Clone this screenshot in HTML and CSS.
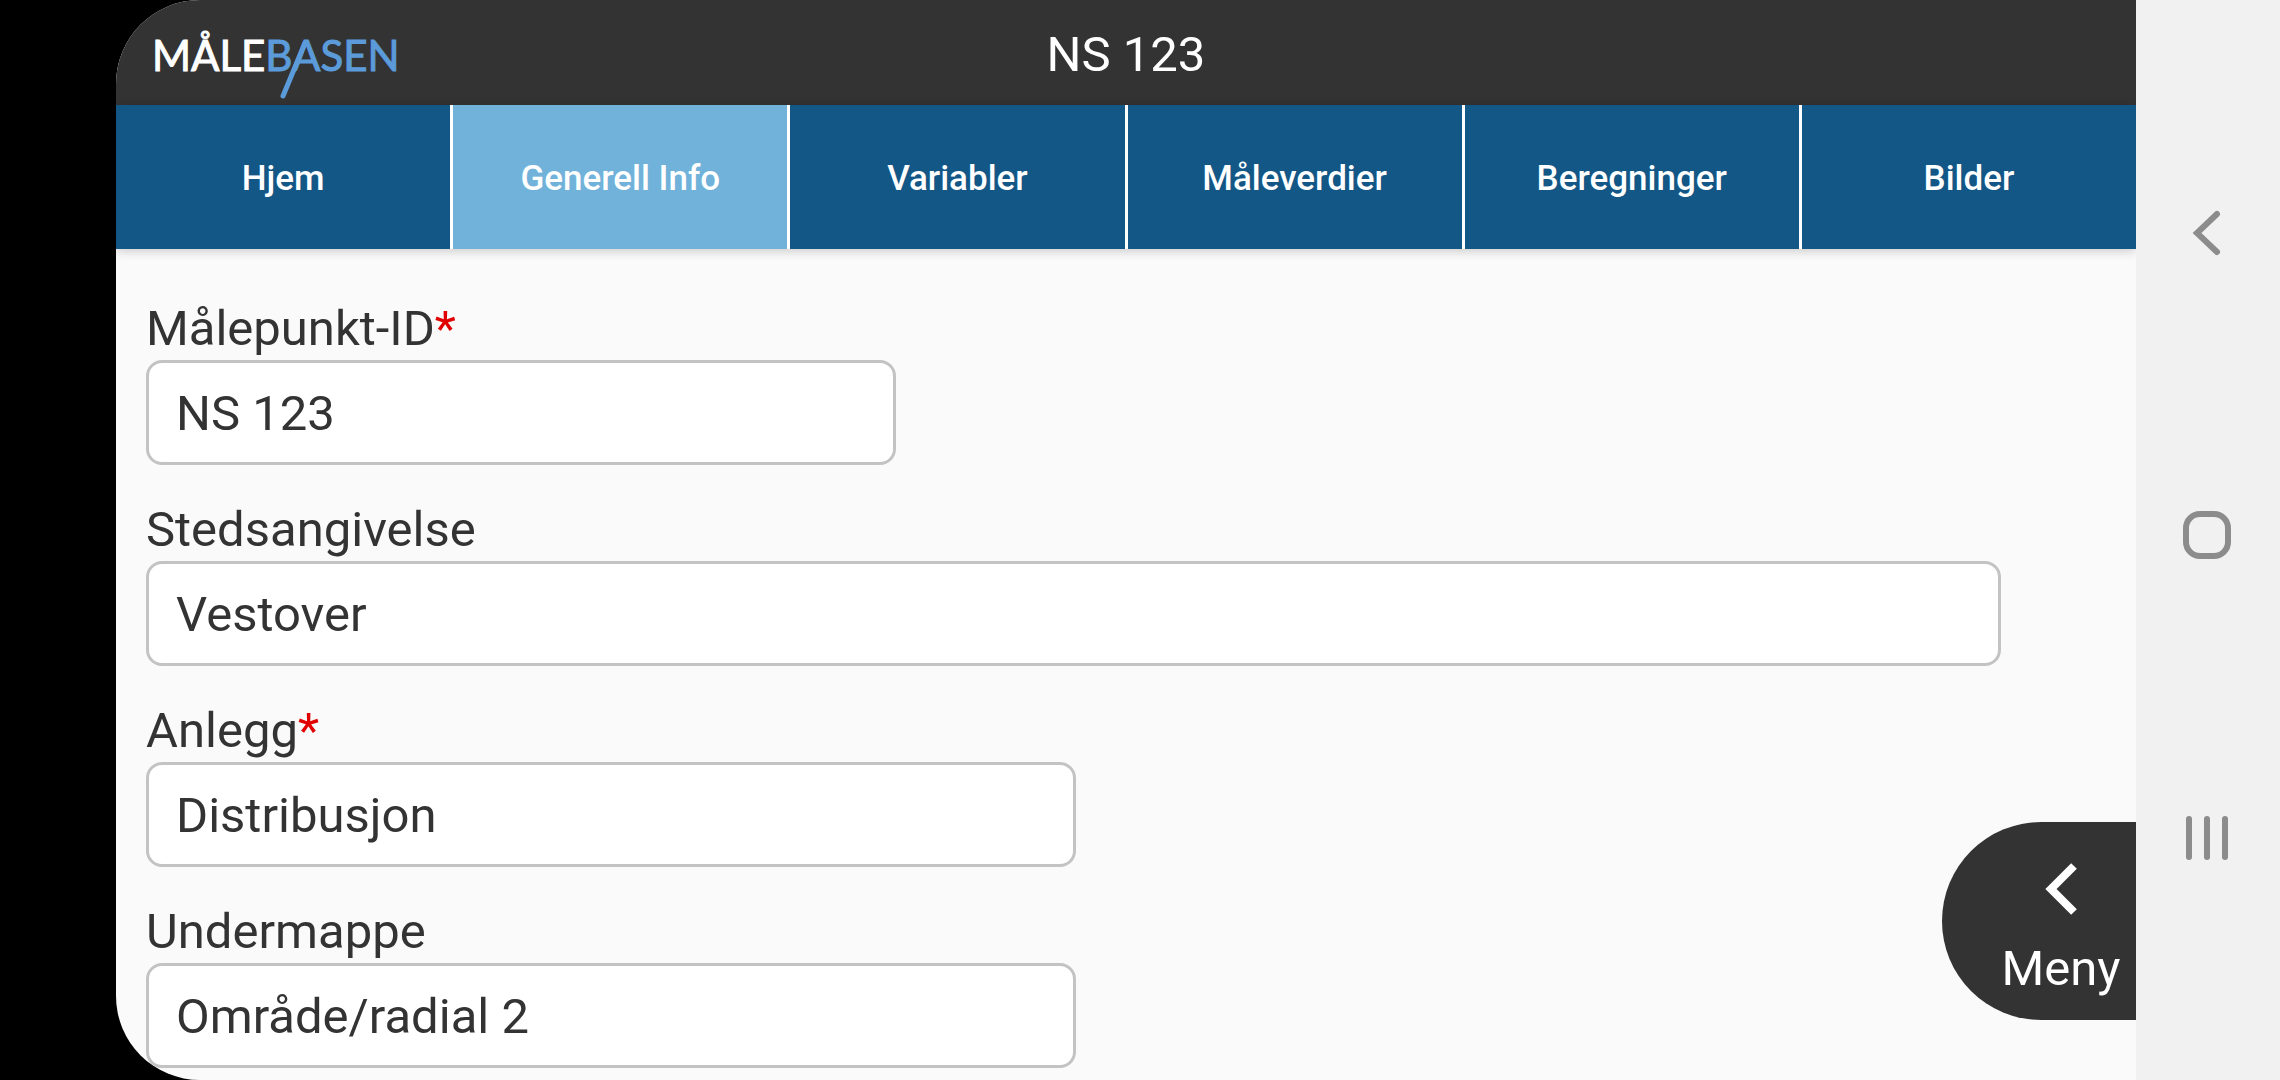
FILE: index.html
```
<!DOCTYPE html>
<html lang="no">
<head>
  <meta charset="UTF-8">
  <title>Målebasen - NS 123</title>
  <link rel="stylesheet" href="styles.css">
</head>
<body>
  <div class="app">
    <header class="header">
      <svg class="logo" viewBox="0 0 250 105" role="img" aria-label="Målebasen">
        <text x="0" y="71"><tspan class="logo-light">MÅLE</tspan><tspan class="logo-blue">BASEN</tspan></text>
        <path class="logo-tail" d="M153 43L131 96"/>
      </svg>
      <h1 class="title">NS 123</h1>
    </header>

    <nav class="tabs">
      <a class="tab" href="#hjem">Hjem</a>
      <a class="tab active" href="#info">Generell Info</a>
      <a class="tab" href="#variabler">Variabler</a>
      <a class="tab" href="#maleverdier">Måleverdier</a>
      <a class="tab" href="#beregninger">Beregninger</a>
      <a class="tab" href="#bilder">Bilder</a>
    </nav>

    <form class="form">
      <div class="field short">
        <label for="malepunkt">Målepunkt-ID<span class="required">*</span></label>
        <input id="malepunkt" type="text" value="NS 123">
      </div>
      <div class="field">
        <label for="sted">Stedsangivelse</label>
        <input id="sted" type="text" value="Vestover">
      </div>
      <div class="field medium">
        <label for="anlegg">Anlegg<span class="required">*</span></label>
        <input id="anlegg" type="text" value="Distribusjon">
      </div>
      <div class="field medium">
        <label for="undermappe">Undermappe</label>
        <input id="undermappe" type="text" value="Område/radial 2">
      </div>
    </form>

    <button class="menu-btn" type="button">
      <svg class="menu-icon" viewBox="0 0 34 54"><path d="M30 4L7 27L30 50"/></svg>
      Meny
    </button>
  </div>

  <div class="system-bar">
    <button class="system-btn" type="button" aria-label="Tilbake">
      <svg viewBox="0 0 48 48"><path d="M34 5L14 24L34 43"/></svg>
    </button>
    <button class="system-btn" type="button" aria-label="Hjem">
      <svg viewBox="0 0 48 48"><rect x="3" y="3" width="42" height="42" rx="14"/></svg>
    </button>
    <button class="system-btn" type="button" aria-label="Nylige apper">
      <svg viewBox="0 0 48 48"><path d="M6 5V43M24 5V43M42 5V43"/></svg>
    </button>
  </div>
</body>
</html>
```
FILE: styles.css
```
* {
  box-sizing: border-box;
}

body {
  display: flex;
  height: 100vh;
  margin: 0;
  padding-left: 116px;
  overflow: hidden;
  background: linear-gradient(to right, #000000 50%, #f1f1f1 50%);
  color: #333333;
  font-family: Roboto, Arial, sans-serif;
  font-size: 49px;
}

.app {
  position: relative;
  display: flex;
  flex-direction: column;
  flex: 1;
  min-width: 0;
  overflow: hidden;
  background: #fafafa;
  border-radius: 84px 0 0 84px;
}

.header {
  display: grid;
  grid-template-columns: 1fr auto 1fr;
  align-items: center;
  height: 105px;
  flex-shrink: 0;
  padding: 0 36px;
  background: #333333;
  color: #ffffff;
}

.logo {
  width: 250px;
  height: 105px;
  font-family: Lato, sans-serif;
  font-size: 42px;
}

.logo-light {
  fill: #ffffff;
  stroke: #ffffff;
}

.logo-blue {
  fill: #5b9bd9;
  stroke: #5b9bd9;
}

.logo-tail {
  stroke: #5b9bd9;
  stroke-width: 5;
  stroke-linecap: round;
}

.title {
  margin: 0;
  padding-top: 4px;
  font-size: 49px;
  font-weight: 400;
}

.tabs {
  display: flex;
  height: 144px;
  flex-shrink: 0;
  box-shadow: 0 2px 10px rgba(0,0,0,0.20);
}

.tab {
  display: flex;
  flex: 1;
  justify-content: center;
  align-items: center;
  padding-top: 2px;
  background: #135787;
  border-right: 3px solid #ffffff;
  color: #ffffff;
  font-size: 35px;
  font-weight: 500;
  text-decoration: none;
}

.tab:last-child {
  border-right: none;
}

.tab.active {
  background: #70b2d9;
}

.form {
  display: flex;
  flex-direction: column;
  gap: 34px;
  padding: 49px 135px 12px 30px;
}

.field {
  display: flex;
  flex-direction: column;
}

.field.short {
  max-width: 750px;
}

.field.medium {
  max-width: 930px;
}

.field label {
  line-height: 62px;
}

.required {
  color: #e00000;
}

.field input {
  width: 100%;
  height: 105px;
  padding: 2px 27px 0;
  background: #ffffff;
  border: 3px solid #c3c3c3;
  border-radius: 16px;
  color: #333333;
  font-family: inherit;
  font-size: 49px;
}

.menu-btn {
  position: absolute;
  right: 0;
  bottom: 60px;
  display: flex;
  flex-direction: column;
  align-items: center;
  gap: 24px;
  width: 194px;
  height: 198px;
  padding: 40px 16px 0 60px;
  background: #333333;
  border: none;
  border-radius: 99px 0 0 99px;
  color: #ffffff;
  font-family: inherit;
  font-size: 49px;
  cursor: pointer;
}

.menu-icon {
  width: 34px;
  height: 54px;
  flex-shrink: 0;
  fill: none;
  stroke: #ffffff;
  stroke-width: 8;
}

.system-bar {
  display: flex;
  flex-direction: column;
  width: 144px;
  padding: 82px 2px 91px 0;
  background: #f1f1f1;
}

.system-btn {
  display: flex;
  flex: 1;
  justify-content: center;
  align-items: center;
  padding: 0;
  background: none;
  border: none;
  cursor: pointer;
}

.system-btn svg {
  width: 48px;
  height: 48px;
  fill: none;
  stroke: #8c8c8c;
  stroke-width: 6;
  stroke-linecap: round;
}
```
